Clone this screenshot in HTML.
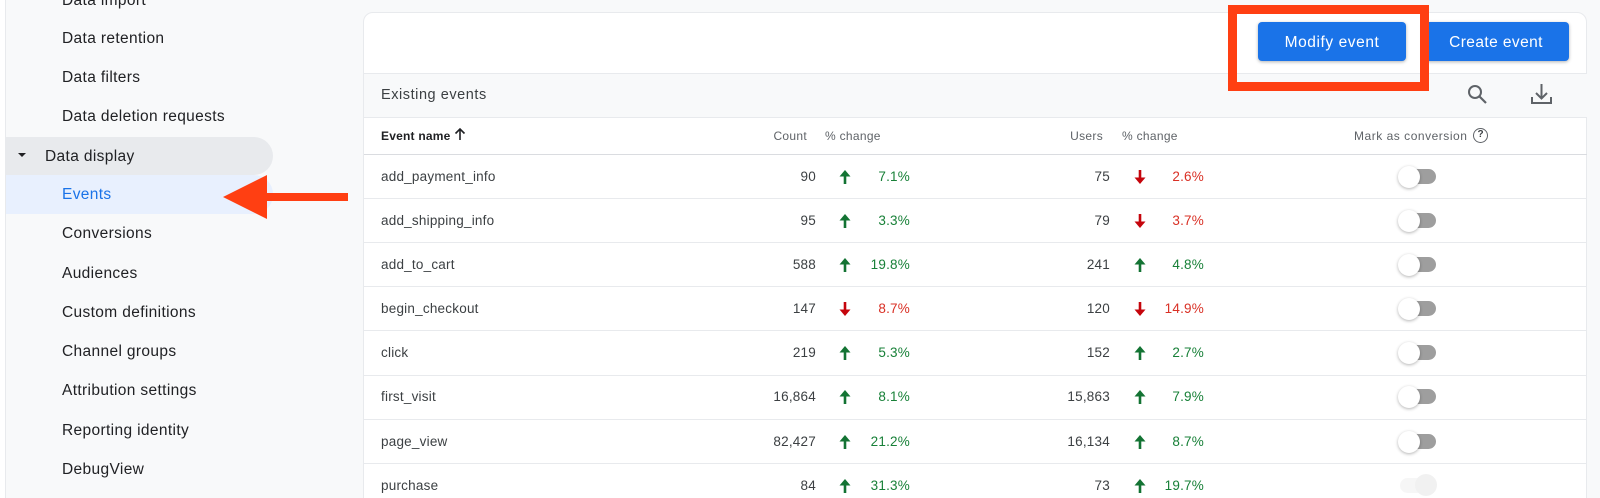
<!DOCTYPE html>
<html style="width:1600px;height:498px;overflow:hidden"><head><meta charset="utf-8"><style>
html,body{margin:0;padding:0}
body{width:1600px;height:498px;overflow:hidden;position:relative;background:#f8f9fa;font-family:"Liberation Sans",sans-serif}
div,span{position:absolute;white-space:nowrap}
svg{position:absolute}
.n{left:62px;font-size:15.5px;color:#202124;line-height:20px;letter-spacing:.36px}
.t{font-size:13.5px;line-height:16px;color:#3c4043;letter-spacing:.22px}
.r{text-align:right;width:80px}
.h{font-size:12px;line-height:16px;color:#5f6368;letter-spacing:.3px}
.l{left:364px;width:1223px;height:1px;background:#e8eaed}
.g{color:#188038}.d{color:#d93025}
.track{width:36px;height:15px;border-radius:8px;background:#9e9e9e}
.thumb{width:22px;height:22px;border-radius:50%;background:#fff;box-shadow:0 1px 3px rgba(0,0,0,.3)}
.btn{background:#1a73e8;color:#fff;border-radius:4px;height:39px;line-height:41px;top:22px;text-align:center;font-size:15.5px;letter-spacing:.58px;box-shadow:0 1px 3px rgba(60,64,67,.4)}
</style></head><body>
<div style="left:0;top:0;width:5px;height:498px;background:#fff"></div>
<div style="left:5px;top:0;width:1px;height:498px;background:#e8eaed"></div>

<div class="n" style="top:-9px">Data import</div>
<div class="n" style="top:29px">Data retention</div>
<div class="n" style="top:68px">Data filters</div>
<div class="n" style="top:107px">Data deletion requests</div>
<div style="left:6px;top:137px;width:267px;height:38px;background:#e8eaed;border-radius:0 19px 19px 0"></div>
<svg style="left:17px;top:152px" width="10" height="6"><path d="M1 1h8L5 5z" fill="#202124"/></svg>
<div class="n" style="left:45px;top:146.500px">Data display</div>
<div style="left:6px;top:175px;width:267px;height:39px;background:#e8f0fe;border-radius:0 19px 19px 0"></div>
<div class="n" style="top:185px;color:#1a73e8">Events</div>
<div class="n" style="top:224px">Conversions</div>
<div class="n" style="top:263.500px">Audiences</div>
<div class="n" style="top:303px">Custom definitions</div>
<div class="n" style="top:342px">Channel groups</div>
<div class="n" style="top:381px">Attribution settings</div>
<div class="n" style="top:420.500px">Reporting identity</div>
<div class="n" style="top:459.500px">DebugView</div>

<div style="left:363px;top:12px;width:1224px;height:500px;background:#fff;border:1px solid #e8eaed;border-radius:10px;box-sizing:border-box"></div>
<div style="left:364px;top:74px;width:1223px;height:43px;background:#f8f9fa"></div>
<div class="l" style="top:73px"></div><div class="l" style="top:117px"></div><div class="l" style="top:154px;background:#dadce0"></div>
<div class="l" style="top:198px"></div><div class="l" style="top:242px"></div><div class="l" style="top:286px"></div><div class="l" style="top:330px"></div><div class="l" style="top:375px"></div><div class="l" style="top:419px"></div><div class="l" style="top:463px"></div>

<div class="btn" style="left:1423px;width:146px;letter-spacing:.42px">Create event</div>
<div class="btn" style="left:1258px;width:148px">Modify event</div>
<div style="left:1228px;top:5px;width:201px;height:86px;border:9px solid #ff3f12;box-sizing:border-box"></div>

<div style="left:381px;top:85.500px;font-size:14.5px;line-height:18px;color:#3c4043;letter-spacing:.55px">Existing events</div>
<svg style="left:1465px;top:82px" width="24" height="24" viewBox="0 0 24 24" fill="none" stroke="#5f6368" stroke-width="2"><circle cx="10" cy="10" r="6"/><path d="M14.500 14.500L21 21" stroke-width="2.200"/></svg>
<svg style="left:1529px;top:82px" width="24" height="24" viewBox="0 0 24 24" fill="none" stroke="#5f6368" stroke-width="2"><path d="M3 15v6h19v-6M12.500 2v14M7 11l5.500 5.500L18 11"/></svg>

<div class="h" style="left:381px;top:128px;color:#202124;font-weight:bold;letter-spacing:.22px">Event name</div>
<svg style="left:453px;top:127px" width="14" height="14" viewBox="0 0 14 14" fill="none" stroke="#202124" stroke-width="1.600"><path d="M7 13V2M2.500 6.500L7 2l4.500 4.500"/></svg>
<div class="h r" style="left:727px;top:128px">Count</div>
<div class="h" style="left:825px;top:128px">% change</div>
<div class="h r" style="left:1023px;top:128px">Users</div>
<div class="h" style="left:1122px;top:128px">% change</div>
<div class="h" style="left:1354px;top:128px;letter-spacing:.52px">Mark as conversion</div>
<div style="left:1473px;top:128px;width:15px;height:15px;box-sizing:border-box;border:1.500px solid #5f6368;border-radius:50%;font-size:10px;line-height:12px;text-align:center;font-weight:bold;color:#3c4043">?</div>

<svg width="0" height="0"><defs>
<symbol id="u" viewBox="0 0 14 16"><path d="M7 15V3" stroke="#137333" stroke-width="2.600"/><path d="M1.500 7.500L7 1l5.500 6.500z" fill="#137333"/></symbol>
<symbol id="w" viewBox="0 0 14 16"><path d="M7 1v12" stroke="#c5050c" stroke-width="2.600"/><path d="M1.500 8.500L7 15l5.500-6.500z" fill="#c5050c"/></symbol>
</defs></svg>

<div class="t" style="left:381px;top:169px">add_payment_info</div>
<div class="t r" style="left:736px;top:169px">90</div><svg style="left:838px;top:169px" width="14" height="16"><use href="#u"/></svg><div class="t r g" style="left:830px;top:169px">7.1%</div>
<div class="t r" style="left:1030px;top:169px">75</div><svg style="left:1133px;top:169px" width="14" height="16"><use href="#w"/></svg><div class="t r d" style="left:1124px;top:169px">2.6%</div>
<div class="track" style="left:1400px;top:169px"></div><div class="thumb" style="left:1398px;top:166px"></div>

<div class="t" style="left:381px;top:213px">add_shipping_info</div>
<div class="t r" style="left:736px;top:213px">95</div><svg style="left:838px;top:213px" width="14" height="16"><use href="#u"/></svg><div class="t r g" style="left:830px;top:213px">3.3%</div>
<div class="t r" style="left:1030px;top:213px">79</div><svg style="left:1133px;top:213px" width="14" height="16"><use href="#w"/></svg><div class="t r d" style="left:1124px;top:213px">3.7%</div>
<div class="track" style="left:1400px;top:213px"></div><div class="thumb" style="left:1398px;top:210px"></div>

<div class="t" style="left:381px;top:257px">add_to_cart</div>
<div class="t r" style="left:736px;top:257px">588</div><svg style="left:838px;top:257px" width="14" height="16"><use href="#u"/></svg><div class="t r g" style="left:830px;top:257px">19.8%</div>
<div class="t r" style="left:1030px;top:257px">241</div><svg style="left:1133px;top:257px" width="14" height="16"><use href="#u"/></svg><div class="t r g" style="left:1124px;top:257px">4.8%</div>
<div class="track" style="left:1400px;top:257px"></div><div class="thumb" style="left:1398px;top:254px"></div>

<div class="t" style="left:381px;top:301px">begin_checkout</div>
<div class="t r" style="left:736px;top:301px">147</div><svg style="left:838px;top:301px" width="14" height="16"><use href="#w"/></svg><div class="t r d" style="left:830px;top:301px">8.7%</div>
<div class="t r" style="left:1030px;top:301px">120</div><svg style="left:1133px;top:301px" width="14" height="16"><use href="#w"/></svg><div class="t r d" style="left:1124px;top:301px">14.9%</div>
<div class="track" style="left:1400px;top:301px"></div><div class="thumb" style="left:1398px;top:298px"></div>

<div class="t" style="left:381px;top:345px">click</div>
<div class="t r" style="left:736px;top:345px">219</div><svg style="left:838px;top:345px" width="14" height="16"><use href="#u"/></svg><div class="t r g" style="left:830px;top:345px">5.3%</div>
<div class="t r" style="left:1030px;top:345px">152</div><svg style="left:1133px;top:345px" width="14" height="16"><use href="#u"/></svg><div class="t r g" style="left:1124px;top:345px">2.7%</div>
<div class="track" style="left:1400px;top:345px"></div><div class="thumb" style="left:1398px;top:342px"></div>

<div class="t" style="left:381px;top:389px">first_visit</div>
<div class="t r" style="left:736px;top:389px">16,864</div><svg style="left:838px;top:389px" width="14" height="16"><use href="#u"/></svg><div class="t r g" style="left:830px;top:389px">8.1%</div>
<div class="t r" style="left:1030px;top:389px">15,863</div><svg style="left:1133px;top:389px" width="14" height="16"><use href="#u"/></svg><div class="t r g" style="left:1124px;top:389px">7.9%</div>
<div class="track" style="left:1400px;top:389px"></div><div class="thumb" style="left:1398px;top:386px"></div>

<div class="t" style="left:381px;top:434px">page_view</div>
<div class="t r" style="left:736px;top:434px">82,427</div><svg style="left:838px;top:434px" width="14" height="16"><use href="#u"/></svg><div class="t r g" style="left:830px;top:434px">21.2%</div>
<div class="t r" style="left:1030px;top:434px">16,134</div><svg style="left:1133px;top:434px" width="14" height="16"><use href="#u"/></svg><div class="t r g" style="left:1124px;top:434px">8.7%</div>
<div class="track" style="left:1400px;top:434px"></div><div class="thumb" style="left:1398px;top:431px"></div>

<div class="t" style="left:381px;top:478px">purchase</div>
<div class="t r" style="left:736px;top:478px">84</div><svg style="left:838px;top:478px" width="14" height="16"><use href="#u"/></svg><div class="t r g" style="left:830px;top:478px">31.3%</div>
<div class="t r" style="left:1030px;top:478px">73</div><svg style="left:1133px;top:478px" width="14" height="16"><use href="#u"/></svg><div class="t r g" style="left:1124px;top:478px">19.7%</div>
<div class="track" style="left:1400px;top:478px;background:#f6f6f6"></div><div class="thumb" style="left:1415px;top:474px;background:#f1f1f1;box-shadow:none"></div>

<div style="left:1587px;top:0;width:13px;height:498px;background:#f8f9fa"></div>

<svg style="left:223px;top:174px" width="126" height="46"><path d="M0 23L44 1v18h81v8H44v18z" fill="#ff3f12"/></svg>
</body></html>
